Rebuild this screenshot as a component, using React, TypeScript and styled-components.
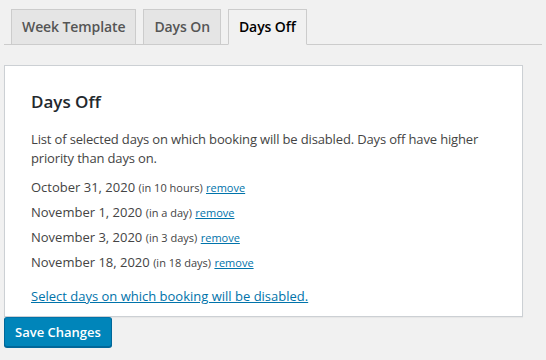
import styled, { createGlobalStyle } from 'styled-components'

const GlobalStyle = createGlobalStyle`
  html, body {
    margin: 0;
    padding: 0;
    background: #f1f1f1;
  }
  body {
    font-family: "Open Sans", "Liberation Sans", Arial, sans-serif;
    font-size: 13px;
    color: #444;
  }
`

const tabs = ['Week Template', 'Days On', 'Days Off']

const days = [
  { date: 'October 31, 2020', rel: '(in 10 hours)' },
  { date: 'November 1, 2020', rel: '(in a day)' },
  { date: 'November 3, 2020', rel: '(in 3 days)' },
  { date: 'November 18, 2020', rel: '(in 18 days)' },
]

export default function App() {
  return (
    <Page>
      <GlobalStyle />
      <TabBar>
        {tabs.map((t) => (
          <Tab key={t} $active={t === 'Days Off'}>
            {t}
          </Tab>
        ))}
      </TabBar>
      <Panel>
        <Heading>Days Off</Heading>
        <Intro>
          List of selected days on which booking will be disabled. Days off
          have higher priority than days on.
        </Intro>
        <DayList>
          {days.map((d) => (
            <DayRow key={d.date}>
              {d.date} <Rel>{d.rel}</Rel> <Link href="#">remove</Link>
            </DayRow>
          ))}
        </DayList>
        <SelectLink href="#">Select days on which booking will be disabled.</SelectLink>
      </Panel>
      <SaveButton>Save Changes</SaveButton>
    </Page>
  )
}

const Page = styled.div`
  padding: 0 0 0 4px;
  width: 542px;
  height: 360px;
  box-sizing: border-box;
`

const TabBar = styled.div`
  display: flex;
  align-items: flex-end;
  padding-top: 9px;
  border-bottom: 1px solid #ccc;
  margin-bottom: 20px;
`

const Tab = styled.div<{ $active?: boolean }>`
  margin-left: 7px;
  margin-bottom: -1px;
  padding: 5px 10px;
  font-size: 14px;
  line-height: 24px;
  font-weight: 600;
  letter-spacing: -0.1px;
  border: 1px solid #ccc;
  border-bottom: 1px solid ${(p) => (p.$active ? '#f1f1f1' : '#ccc')};
  background: ${(p) => (p.$active ? '#f1f1f1' : '#e5e5e5')};
  color: ${(p) => (p.$active ? '#000' : '#555')};
`

const Panel = styled.div`
  width: 519px;
  box-sizing: border-box;
  background: #fff;
  border: 1px solid #ccd0d4;
  box-shadow: 0 1px 1px rgba(0, 0, 0, 0.04);
  padding: 22px 26px 10px;
`

const Heading = styled.h2`
  margin: 0 0 14px;
  font-size: 17px;
  font-weight: 600;
  color: #23282d;
  line-height: 28px;
`

const Intro = styled.p`
  margin: 0 0 7px;
  line-height: 19px;
  letter-spacing: -0.15px;
`

const DayList = styled.div`
  display: flex;
  flex-direction: column;
  margin-bottom: 12px;
`

const DayRow = styled.div`
  line-height: 25px;
`

const Rel = styled.span`
  font-size: 11px;
`

const Link = styled.a`
  font-size: 11px;
  color: #0073aa;
  text-decoration: underline;
`

const SelectLink = styled.a`
  display: inline-block;
  color: #0073aa;
  text-decoration: underline;
  line-height: 19px;
`

const SaveButton = styled.button`
  display: block;
  height: 30px;
  padding: 0 10px;
  font-family: inherit;
  font-size: 13px;
  font-weight: 600;
  color: #fff;
  background: #0085ba;
  border: 1px solid #0073aa;
  border-color: #0073aa #006799 #006799;
  border-radius: 3px;
  box-shadow: 0 1px 0 #006799;
  cursor: pointer;
`
